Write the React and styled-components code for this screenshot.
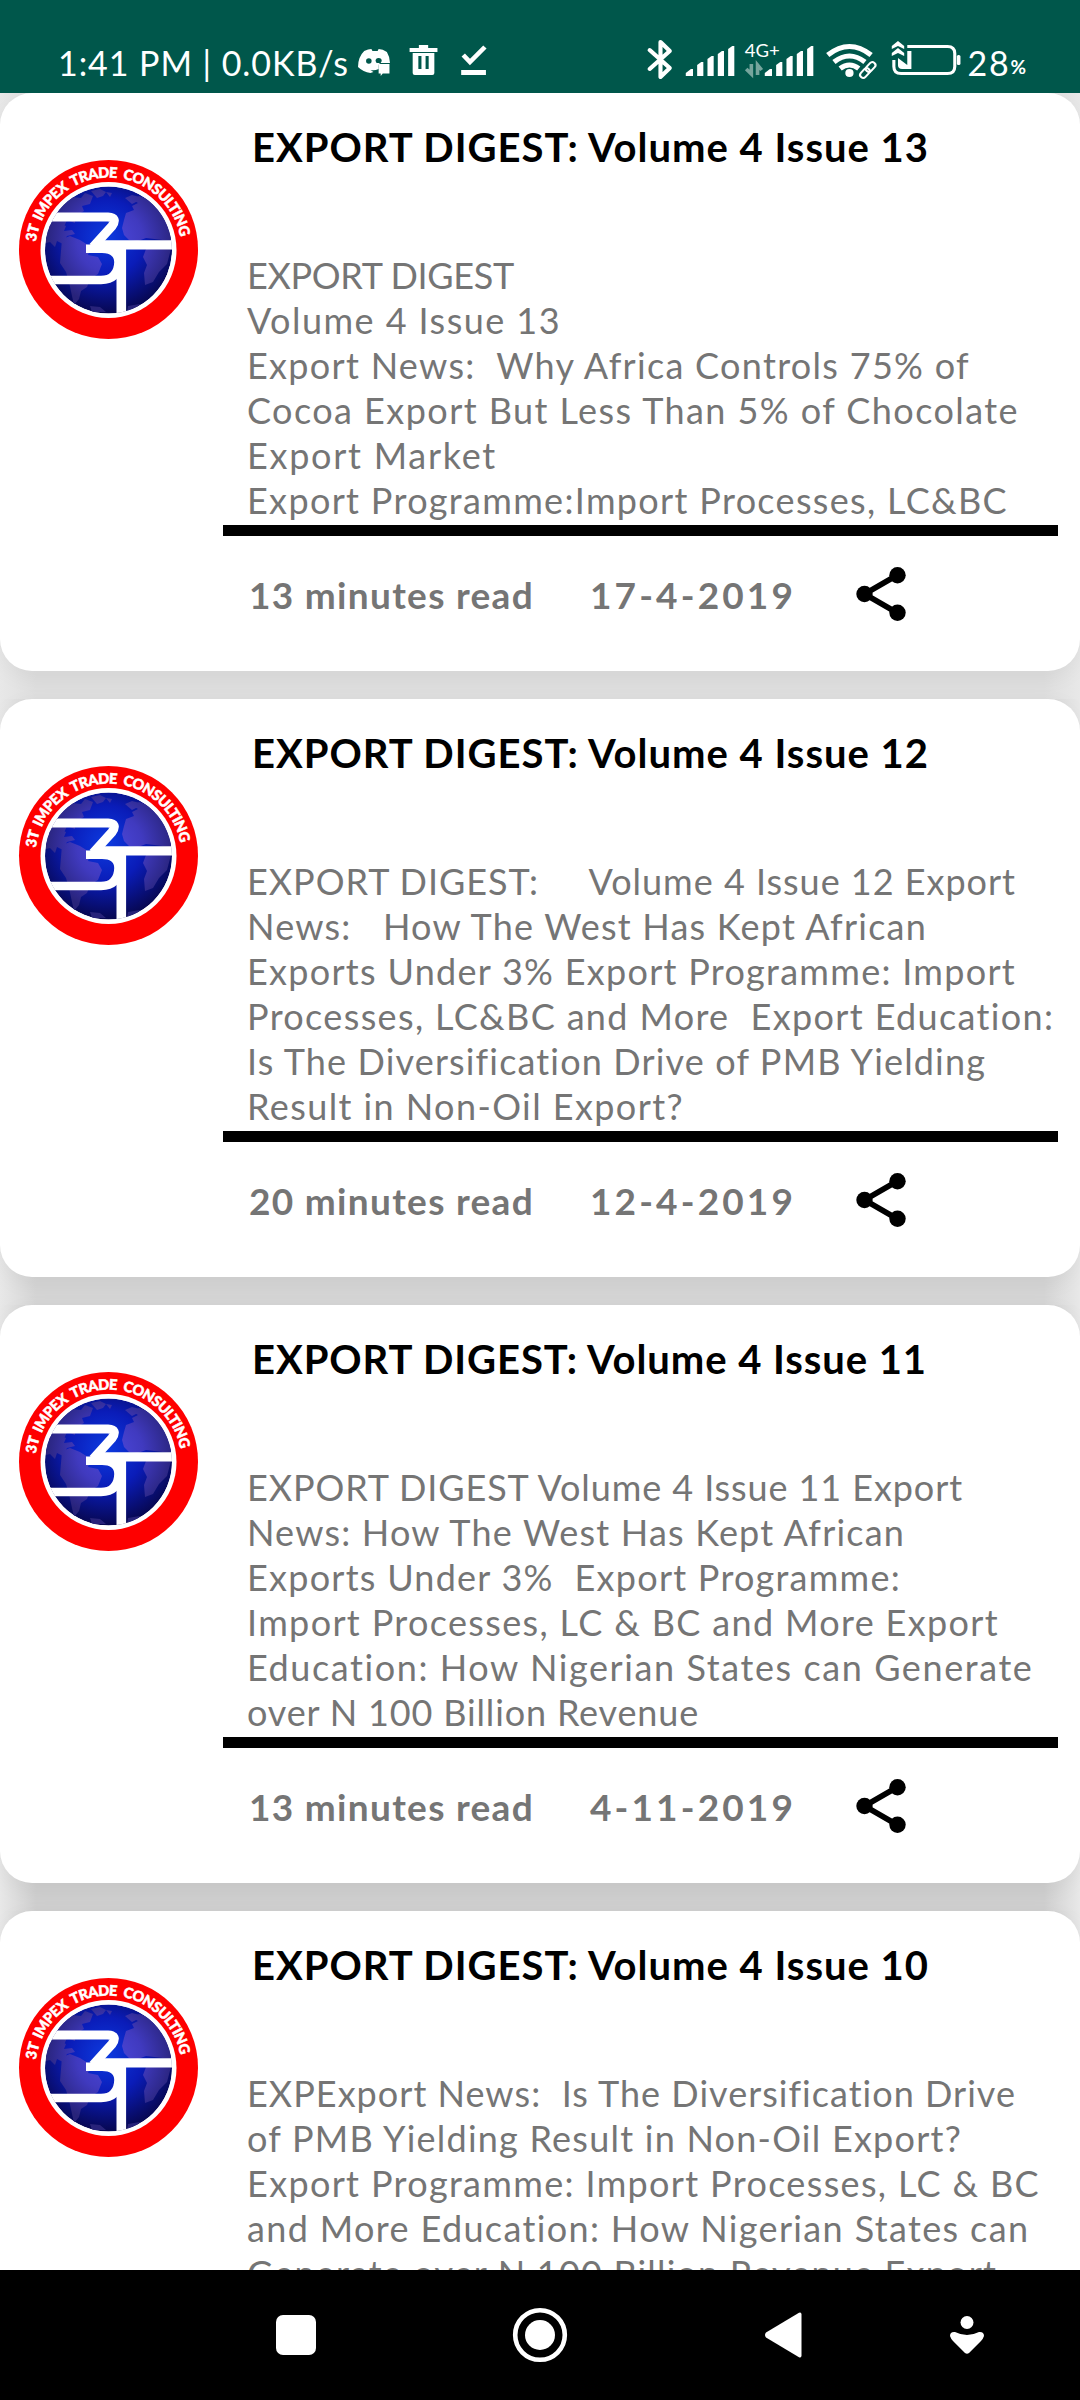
import React, { useLayoutEffect, useRef, useState } from "react";
import styled, { createGlobalStyle } from "styled-components";

const GlobalStyle = createGlobalStyle`
  * { box-sizing: border-box; }
  body { margin: 0; background: #000; }
`;

const Screen = styled.div`
  width: 1080px;
  height: 2400px;
  display: flex;
  flex-direction: column;
  overflow: hidden;
  font-family: Lato, "Open Sans", sans-serif;
`;

const StatusBar = styled.header`
  flex: none;
  height: 93px;
  padding: 38px 54px 0 58px;
  display: flex;
  justify-content: space-between;
  background: #00574b;
  color: #fff;
`;

const StatusGroup = styled.div`
  display: flex;
  height: 44px;
  align-items: flex-start;
`;

const StatusText = styled.span`
  font-size: 34px;
  line-height: 44px;
  padding-top: 3px;
  margin-right: ${(p) => p.$after || 0}px;
`;

const Percent = styled.span`
  font-size: 19px;
  line-height: 44px;
  padding-top: 7px;
  font-weight: 700;
`;

const StatusIcon = styled.svg`
  display: block;
  flex: none;
  margin-right: ${(p) => p.$after || 0}px;
`;

const List = styled.main`
  flex: 1;
  min-height: 0;
  overflow: hidden;
`;

const Slot = styled.section`
  height: 606px;
  background: linear-gradient(90deg, #e8e8e8, ${(p) => p.$shade} 36px, ${(p) => p.$shade} 1044px, #e8e8e8);
`;

const Card = styled.article`
  height: 578px;
  display: grid;
  grid-template-columns: 223px 835px;
  background: #fff;
  border-radius: 32px;
  box-shadow: 0 6px 22px rgba(0, 0, 0, 0.05);
`;

const LogoCell = styled.div`
  padding-top: 47px;
`;

const LogoImage = styled.svg`
  display: block;
`;

const Content = styled.div`
  padding-top: 30px;
`;

const Title = styled.h2`
  margin: 0 0 82px 29px;
  height: 48px;
  font-size: 40px;
  line-height: 48px;
  font-weight: 700;
  color: #000;
`;

const Summary = styled.div`
  height: 272px;
  padding-left: 24px;
  font-size: 36px;
  line-height: 45px;
  color: #757575;
`;

const Divider = styled.div`
  height: 11px;
  background: #000;
`;

const Meta = styled.footer`
  margin-top: 31px;
  height: 54px;
  padding-left: 26px;
  display: grid;
  grid-template-columns: 341px 266px 60px;
  align-items: center;
  font-size: 37px;
  line-height: 45px;
  font-weight: 700;
  color: #757575;
`;

const Line = styled.span`
  display: block;
  width: max-content;
  white-space: pre;
`;

const NavBar = styled.nav`
  flex: none;
  height: 130px;
  padding-left: 276px;
  display: grid;
  grid-template-columns: 236px 253px 185px 40px;
  align-items: center;
  background: #000;
`;

/* Spreads the letters of one line over the given width. */
function FitLine({ text, width }) {
  const ref = useRef(null);
  const [spacing, setSpacing] = useState(0);
  useLayoutEffect(() => {
    setSpacing((width - ref.current.getBoundingClientRect().width) / text.length);
  }, [text, width]);
  return <Line ref={ref} style={{ letterSpacing: spacing }}>{text}</Line>;
}

function Logo() {
  return (
    <LogoImage width="220" height="220" viewBox="0 0 220 220">
      <defs>
        <radialGradient id="sea" cx="0.48" cy="0.4" r="0.6">
          <stop offset="0" stopColor="#0d3be0" />
          <stop offset="0.5" stopColor="#0a1cb8" />
          <stop offset="1" stopColor="#070750" />
        </radialGradient>
        <radialGradient id="land" gradientUnits="userSpaceOnUse" cx="110" cy="100" r="66">
          <stop offset="0" stopColor="#4c48dc" />
          <stop offset="0.5" stopColor="#403abf" />
          <stop offset="1" stopColor="#28237a" />
        </radialGradient>
        <clipPath id="globe"><circle cx="108.5" cy="110" r="63.5" /></clipPath>
        <path id="rim" d="M36 102 A73 73 0 0 1 181 102" />
      </defs>
      <circle cx="108.5" cy="109.5" r="89.5" fill="#fe0000" />
      <circle cx="108.5" cy="110" r="68" fill="#fff" />
      <g clipPath="url(#globe)">
        <circle cx="108.5" cy="110" r="63.5" fill="url(#sea)" />
        <g fill="url(#land)">
          <path d="M62 64l10-7 9 1 4-5 8 3-3 8-8 2 2 5-9 5 0 7-8-3-4 9-8 2-6-4z" />
          <path d="M46 86l12-3 8 3-2 5 8-1 3 4-8 2-4 8-6-3-2 6-5-5-4 1z" />
          <path d="M62 99l8-3 10 4 11 7-3 8 10 2 4 7-4 10-8 5-3 8-6 4-2 8-5 6-2-9-3-14-3-10-6-9z" />
          <path d="M91 51l9-2 6 3-3 4-6 2zM106 52l6 1-2 4z" />
          <path d="M124 80l2-7 8-3-2-4 6-3-5-3 6-4 10 3 8 7 7 9 7 12 0 14-25-3-8 3-9-1-5-5-2-7z" />
          <path d="M125 58l7-3 8 2 5 5-7-1-6 3z" />
          <path d="M146 109h25l-4 15-8 8-6 10-8 3-1-12 3-8-4-8z" />
          <path d="M90 166l10 1 6 5h-14zM128 166l12-2-5 6-8 2z" />
        </g>
        <g fill="none" stroke="#fff" strokeWidth="9.2">
          <path d="M44 77H108Q118 77.5 112 86L93 107" />
          <path d="M86 108.8H102Q118.5 109 118.5 122Q118 140 101 140H50" strokeWidth="8.6" />
          <path d="M98 104.8H176" />
          <path d="M121.3 104V176" strokeWidth="9.6" />
        </g>
      </g>
      <text fill="#fff" stroke="#fff" strokeWidth="0.5" fontFamily="Lato, sans-serif" fontWeight="900" fontSize="14.5" wordSpacing="3">
        <textPath href="#rim" textLength="207" lengthAdjust="spacing">3T IMPEX TRADE CONSULTING</textPath>
      </text>
    </LogoImage>
  );
}

function ShareIcon() {
  return (
    <svg width="50" height="54" viewBox="0 0 50 54">
      <path d="M41.5 8L8.5 27L41.5 46" fill="none" stroke="#000" strokeWidth="5.6" />
      <circle cx="41.5" cy="8.2" r="8.2" />
      <circle cx="8.5" cy="27" r="8.2" />
      <circle cx="41.5" cy="45.8" r="8.2" />
    </svg>
  );
}

const SignalBars = () => (
  <g fill="#fff">
    <path d="M0 38v-3l5-4h2v7z" />
    <path d="M11 38V27l4-3h2v14z" />
    <path d="M21 38V21l4-3h2v20z" />
    <path d="M31 38V16l4-3h2v25z" />
    <path d="M41 38V11l4-3h2v30z" />
  </g>
);

function Notifications() {
  return (
    <StatusIcon width="130" height="44" viewBox="347 38 126 44" preserveAspectRatio="none" fill="#fff">
      <path d="M353 51q4-2 7-2l1 2h5l1-2q4 0 8 3q3 5 3 11h-9q-2 0-2 3v3q-4 2-8 1l3 2-3 1q-7-1-12-6q0-10 6-16z" />
      <circle cx="357.5" cy="61" r="2.7" fill="#00574b" />
      <path d="M364 61q0-3 3-3t3 3l-1 2h-4z" fill="#00574b" />
      <path d="M367 64h10.500v9.500h-6.500l-2 2.500v-2.500h-2z" />
      <path d="M397 48h9v-3h9v3h9v4H397zM400 53h21v20q0 2-2 2h-17q-2 0-2-2z" />
      <path d="M407 56v13M414 56v13" stroke="#00574b" strokeWidth="3" />
      <path d="M449 55l6.500 7L470 47" fill="none" stroke="#fff" strokeWidth="4.500" />
      <path d="M447 70h24v5h-24z" />
    </StatusIcon>
  );
}

function SystemIcons() {
  return (
    <StatusIcon width="317" height="44" viewBox="642 38 307 44" preserveAspectRatio="none" $after={5}>
      <path d="M646.500 50l19.500 18-9 9V42l9 9-19.500 18" fill="none" stroke="#fff" strokeWidth="4" strokeLinejoin="round" strokeLinecap="round" />
      <g transform="translate(681.500 38)"><SignalBars /></g>
      <text x="738.5" y="57" fontSize="17" fill="#fff" textLength="34" lengthAdjust="spacingAndGlyphs">4G+</text>
      <path d="M745 64v10l-5-5M751 75V65l4 5" fill="none" stroke="#76a59d" strokeWidth="3.500" />
      <g transform="translate(758 38)"><SignalBars /></g>
      <g fill="none" stroke="#fff" strokeWidth="5">
        <path d="M819 55q21-17 42 0" />
        <path d="M825 62q15-12 30 0" />
        <path d="M831 68.500q9-7 18 0" />
      </g>
      <circle cx="840" cy="73" r="4" fill="#fff" />
      <g fill="none" stroke="#fff" strokeWidth="2">
        <rect x="-5.500" y="-3" width="11" height="6" rx="3" transform="translate(860.500 67) rotate(-48)" />
        <rect x="-5.500" y="-3" width="11" height="6" rx="3" transform="translate(855 73) rotate(-48)" />
      </g>
      <path d="M896 46.500H935q7 0 7 7v13q0 7-7 7H890q-7 0-7-7V60" fill="none" stroke="#fff" strokeWidth="3" />
      <path d="M881 46l6-5 6 5v3l-6-3-6 3zM881 53l6-5 6 5v3l-6-3-6 3z" fill="#fff" />
      <path d="M887 58l9 7V51h4v18h-9q-4 0-4-4z" fill="#fff" />
      <rect x="944" y="55" width="3.500" height="10" rx="1.500" fill="#fff" />
    </StatusIcon>
  );
}

const posts = [
  {
    title: ["EXPORT DIGEST: Volume 4 Issue 13", 677],
    shade: "#dedede",
    lines: [
      ["EXPORT DIGEST", 267],
      ["Volume 4 Issue 13", 314],
      ["Export News:  Why Africa Controls 75% of", 723],
      ["Cocoa Export But Less Than 5% of Chocolate", 772],
      ["Export Market", 250],
      ["Export Programme:Import Processes, LC&BC", 761],
    ],
    read: ["13 minutes read", 285],
    date: ["17-4-2019", 206],
  },
  {
    title: ["EXPORT DIGEST: Volume 4 Issue 12", 677],
    shade: "#d5d5d5",
    lines: [
      ["EXPORT DIGEST:     Volume 4 Issue 12 Export", 769],
      ["News:   How The West Has Kept African", 680],
      ["Exports Under 3% Export Programme: Import", 769],
      ["Processes, LC&BC and More  Export Education:", 808],
      ["Is The Diversification Drive of PMB Yielding", 739],
      ["Result in Non-Oil Export?", 437],
    ],
    read: ["20 minutes read", 285],
    date: ["12-4-2019", 206],
  },
  {
    title: ["EXPORT DIGEST: Volume 4 Issue 11", 675],
    shade: "#cfcfcf",
    lines: [
      ["EXPORT DIGEST Volume 4 Issue 11 Export", 716],
      ["News: How The West Has Kept African", 658],
      ["Exports Under 3%  Export Programme:", 654],
      ["Import Processes, LC & BC and More Export", 752],
      ["Education: How Nigerian States can Generate", 787],
      ["over N 100 Billion Revenue", 452],
    ],
    read: ["13 minutes read", 285],
    date: ["4-11-2019", 206],
  },
  {
    title: ["EXPORT DIGEST: Volume 4 Issue 10", 677],
    shade: "#cccccc",
    lines: [
      ["EXPExport News:  Is The Diversification Drive", 769],
      ["of PMB Yielding Result in Non-Oil Export?", 715],
      ["Export Programme: Import Processes, LC & BC", 793],
      ["and More Education: How Nigerian States can", 783],
      ["Generate over N 100 Billion Revenue Export", 750],
    ],
  },
];

function Post({ post }) {
  return (
    <Slot $shade={post.shade}>
      <Card>
        <LogoCell><Logo /></LogoCell>
        <Content>
          <Title><FitLine text={post.title[0]} width={post.title[1]} /></Title>
          <Summary>
            {post.lines.map(([text, width]) => <FitLine key={text} text={text} width={width} />)}
          </Summary>
          <Divider />
          {post.read && (
            <Meta>
              <FitLine text={post.read[0]} width={post.read[1]} />
              <FitLine text={post.date[0]} width={post.date[1]} />
              <ShareIcon />
            </Meta>
          )}
        </Content>
      </Card>
    </Slot>
  );
}

export default function App() {
  return (
    <Screen>
      <GlobalStyle />
      <StatusBar>
        <StatusGroup>
          <StatusText $after={9}><FitLine text="1:41 PM | 0.0KB/s" width={291} /></StatusText>
          <Notifications />
        </StatusGroup>
        <StatusGroup>
          <SystemIcons />
          <StatusText><FitLine text="28" width={43} /></StatusText>
          <Percent>%</Percent>
        </StatusGroup>
      </StatusBar>
      <List>
        {posts.map((post) => <Post key={post.title[0]} post={post} />)}
      </List>
      <NavBar>
        <svg width="40" height="40"><rect width="40" height="40" rx="7" fill="#fff" /></svg>
        <svg width="56" height="56" viewBox="0 0 56 56">
          <circle cx="28" cy="28" r="24.800" fill="none" stroke="#fff" strokeWidth="4.600" />
          <circle cx="28" cy="28" r="15" fill="#fff" />
        </svg>
        <svg width="37" height="46" viewBox="0 0 37 46">
          <path d="M1 20.500L34 0.800Q36.500 0 36.500 2.500V43.500Q36.500 46 34 45.200L1 25.500Q-1 23 1 20.500z" fill="#fff" />
        </svg>
        <svg width="34" height="38" viewBox="0 0 34 38" fill="#fff">
          <circle cx="17" cy="6.500" r="6.500" />
          <path d="M5 16Q17 22 29 16Q34 15.500 34 20Q33 23 31 25L19 37Q17 38.500 15 37L3 25Q1 23 0 20Q0 15.500 5 16z" />
        </svg>
      </NavBar>
    </Screen>
  );
}
